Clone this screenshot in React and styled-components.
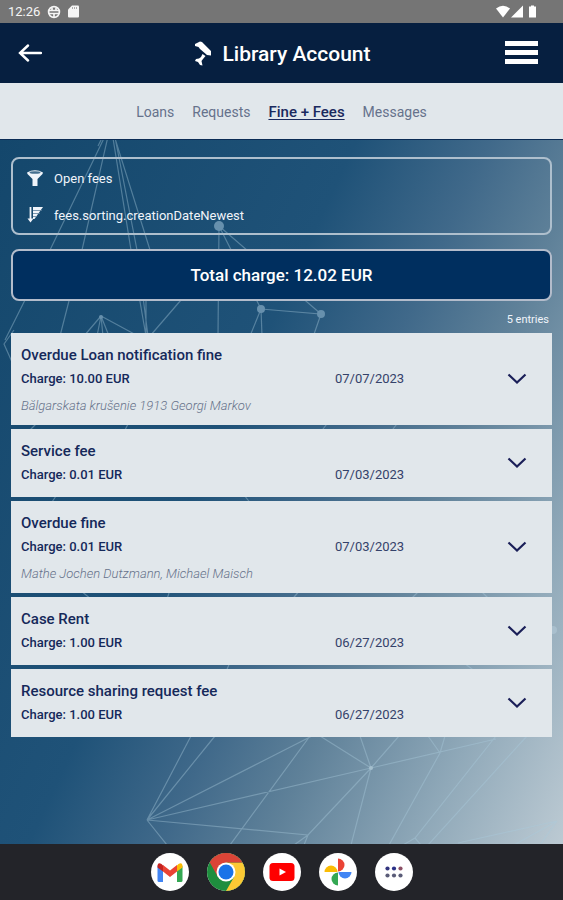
import React, { useState } from "react";
import styled, { createGlobalStyle } from "styled-components";

const GlobalStyle = createGlobalStyle`
  *, *::before, *::after { box-sizing: border-box; }
  body { margin: 0; font-family: Roboto, "Liberation Sans", sans-serif; }
  button { font: inherit; color: inherit; background: none; border: 0; padding: 0; cursor: pointer; }
`;

const Screen = styled.div`
  display: flex;
  flex-direction: column;
  min-height: 100vh;
  background: #202125;
`;

const StatusBar = styled.div`
  display: flex;
  align-items: center;
  justify-content: space-between;
  height: 23px;
  padding: 0 25px 0 8px;
  background: #757575;
  color: #f5f5f5;
  font-size: 13px;
`;

const StatusGroup = styled.div`
  display: flex;
  align-items: center;
  gap: 7px;
`;

const Header = styled.header`
  display: grid;
  grid-template-columns: 42px 1fr 34px;
  align-items: center;
  height: 60px;
  padding: 0 24px 0 18px;
  background: #061f40;
  color: #fff;
`;

const IconButton = styled.button`
  display: flex;
  align-items: center;
  justify-content: ${(p) => p.$align || "center"};
  height: 40px;
`;

const Title = styled.h1`
  display: flex;
  align-items: center;
  justify-content: center;
  gap: 10px;
  margin: 0;
  padding-top: 2px;
  font-size: 21px;
  font-weight: 500;
  line-height: 24px;
`;

const Tabs = styled.nav`
  display: flex;
  align-items: center;
  justify-content: center;
  gap: 18px;
  height: 57px;
  padding-top: 2px;
  background: #e1e7eb;
  border-bottom: 1px solid #0b2c55;
`;

const Tab = styled.a`
  color: ${(p) => (p.$active ? "#1a2a5e" : "#66728c")};
  font-size: ${(p) => (p.$active ? 15 : 14)}px;
  font-weight: ${(p) => (p.$active ? 500 : 400)};
  line-height: 20px;
  text-decoration: ${(p) => (p.$active ? "underline" : "none")};
  text-underline-offset: 2px;
`;

const Main = styled.main`
  position: relative;
  flex: 1;
  padding: 17px 11px 24px;
  background: linear-gradient(115deg, #14476c 0%, #1f5278 40%, #40698a 55%, #5f8199 67%, #90a9b9 84%, #bccad3 100%);
`;

const Network = styled.svg`
  position: absolute;
  inset: 0;
  width: 100%;
  height: 100%;
`;

const Content = styled.div`
  position: relative;
  display: flex;
  flex-direction: column;
`;

const Filters = styled.section`
  display: flex;
  flex-direction: column;
  gap: 13px;
  padding: 7px 13px 6px;
  border: 2px solid #aebfcd;
  border-radius: 8px;
`;

const FilterButton = styled.button`
  display: flex;
  align-items: center;
  gap: 10px;
  height: 24px;
  color: #f0f4fa;
  font-size: 13px;
  text-align: left;
`;

const Total = styled.div`
  margin-top: 14px;
  padding: 12px;
  border: 2px solid #b3bccb;
  border-radius: 8px;
  background: #002f5f;
  color: #fff;
  font-size: 17px;
  font-weight: 500;
  line-height: 24px;
  text-align: center;
`;

const Count = styled.p`
  margin: 11px 3px 5px;
  color: #f0f4fa;
  font-size: 11px;
  line-height: 16px;
  text-align: right;
`;

const List = styled.ul`
  display: flex;
  flex-direction: column;
  gap: 4px;
  margin: 0;
  padding: 0;
  list-style: none;
`;

const Card = styled.li`
  display: grid;
  grid-template-columns: 1fr 50px;
  align-items: center;
  padding: 10px;
  background: #e1e7eb;
  color: #15295a;
`;

const FeeTitle = styled.h2`
  margin: 0;
  font-size: 15px;
  font-weight: 500;
  line-height: 24px;
`;

const FeeRow = styled.div`
  display: grid;
  grid-template-columns: 2fr 1fr;
  font-size: 13px;
  font-weight: 500;
  line-height: 24px;
`;

const FeeDate = styled.time`
  color: #34426a;
  font-weight: 400;
`;

const FeeNote = styled.p`
  margin: 6px 0 0;
  color: #66728a;
  font-size: 13px;
  font-style: italic;
  font-weight: 300;
  line-height: 18px;
`;

const Dock = styled.footer`
  display: flex;
  align-items: center;
  justify-content: center;
  gap: 18px;
  height: 56px;
  background: #232429;
`;

const AppButton = styled.button`
  display: flex;
  width: 38px;
  height: 38px;
  border-radius: 50%;
  background: #fff;
  overflow: hidden;
`;

const tabs = ["Loans", "Requests", "Fine + Fees", "Messages"];

const fees = [
  { title: "Overdue Loan notification fine", charge: "10.00", date: "07/07/2023", note: "Bălgarskata krušenie 1913 Georgi Markov" },
  { title: "Service fee", charge: "0.01", date: "07/03/2023" },
  { title: "Overdue fine", charge: "0.01", date: "07/03/2023", note: "Mathe Jochen Dutzmann, Michael Maisch" },
  { title: "Case Rent", charge: "1.00", date: "06/27/2023" },
  { title: "Resource sharing request fee", charge: "1.00", date: "06/27/2023" },
];

const networkLines = `
M107 132L50 250L5 340 M109 132L82 250L60 336 M112 132L131 250L146 336 M114 132L137 250L148 336 M113 132L150 250
M105 132L98 146 M219 226L218 336 M219 226L261 309L321 314L219 226 M261 309L250 336 M261 309L262 336 M321 314L312 340
M181 300L150 336 M146 300V336 M101 316L97 336 M101 316L103 336 M101 316L109 336 M101 316L138 336 M101 316L84 336
M14 330L4 344L12 362 M40 420L20 440 M130 420L120 440 M330 420L316 438 M400 420L386 438 M60 490L50 505 M240 490L252 505
M80 590L92 600 M170 590L166 602 M420 590L408 602 M300 590L290 602 M480 590L492 602 M230 662L226 672 M460 660L476 672
M147 820L191 736 M147 820L215 736 M147 820L312 736 M147 820L371 768L496 739 M147 820L308 835 M147 820L167 845
M371 768L320 736 M371 768L360 736 M371 768L399 736 M371 768L308 835L294 845 M308 835L304 845 M371 768L351 845
M440 753L428 736 M440 753L445 736 M440 753L389 845 M310 736L230 845 M496 736L415 838L403 845 M415 838L421 845
M527 736L428 845 M557 821L458 843 M557 821L514 845 M557 821L540 845`;

const NetworkArt = () => (
  <Network viewBox="0 140 563 704" preserveAspectRatio="xMidYMin slice" aria-hidden="true">
    <path d={networkLines} fill="none" stroke="#a9cbdc" strokeOpacity="0.4" strokeWidth="1.2" />
    <g fill="#6790ad">
      <circle cx="219" cy="226" r="5" />
      <circle cx="261" cy="309" r="4" />
      <circle cx="321" cy="314" r="4" />
      <circle cx="101" cy="317" r="2" />
      <circle cx="371" cy="768" r="2" fill="#a4bfcd" />
      <circle cx="553" cy="630" r="4" fill="#a9bfcd" />
    </g>
  </Network>
);

const GlobeIcon = () => (
  <svg width="14" height="14" viewBox="0 0 14 14" fill="none" stroke="currentColor" strokeWidth="1.7" aria-hidden="true">
    <circle cx="7" cy="7" r="5.4" />
    <path d="M2 5.5h10M2 8.5h10M7 9v3M5 2.5v3M9 2.5v3" />
  </svg>
);

const CardIcon = () => (
  <svg width="11" height="13" viewBox="0 0 11 13" aria-hidden="true">
    <path d="M4 .5h6a1 1 0 0 1 1 1v10a1 1 0 0 1-1 1H1a1 1 0 0 1-1-1v-7z" fill="currentColor" />
    <path d="M4.500 2v2M6.500 2v2M8.500 2v2" stroke="#999" strokeWidth=".8" />
  </svg>
);

const SignalIcons = () => (
  <svg width="42" height="14" viewBox="0 0 42 14" fill="#fff" aria-hidden="true">
    <path d="M0 3.500Q7-2 14 3.500L7 12.500z" />
    <path d="M27 .5v12H15z" />
    <path d="M33 1.500h2V.5h3v1h2v11h-7z" />
  </svg>
);

const BackIcon = () => (
  <svg width="24" height="20" viewBox="0 0 24 20" fill="none" stroke="currentColor" strokeWidth="2.400" strokeLinecap="round" aria-hidden="true">
    <path d="M23 10H2M10 2.500L2 10l8 7.500" />
  </svg>
);

const MenuIcon = () => (
  <svg width="34" height="24" viewBox="0 0 34 24" fill="currentColor" aria-hidden="true">
    <path d="M0 0h33v5H0zM0 9h33v5H0zM0 18h33v5H0z" />
  </svg>
);

const LogoIcon = () => (
  <svg width="18" height="26" viewBox="0 0 18 26" fill="currentColor" aria-hidden="true">
    <path d="M1 3L6 .5L8 1L17 10V14.500L13 14L6 8L4.500 6L1 5z" />
    <path d="M8.500 13L11.500 15L9 18L7.500 20L8.500 24.500L6 24L4 21L1 20L2 18L5 17.500L7 16z" />
  </svg>
);

const FunnelIcon = () => (
  <svg width="18" height="18" viewBox="0 0 18 18" aria-hidden="true">
    <path d="M1 3.500Q9-1 17 3.500Q17 5 15 6.500L11.500 10V17H6.500V10L3 6.500Q1 5 1 3.500z" fill="currentColor" />
    <ellipse cx="9" cy="3.500" rx="5.500" ry="1.300" fill="#456f8f" />
  </svg>
);

const SortIcon = () => (
  <svg width="18" height="18" viewBox="0 0 18 18" aria-hidden="true">
    <path d="M4.500 1V14" fill="none" stroke="currentColor" strokeWidth="1.800" />
    <path d="M1.500 12.500H7.500L4.500 16.500z" fill="currentColor" />
    <path d="M7 1H17L8.500 13H7z" fill="currentColor" />
    <path d="M7 4.500H16M7 7.500H14M7 10.500H11" stroke="#5b7f9c" strokeWidth=".8" />
  </svg>
);

const ChevronIcon = () => (
  <svg width="20" height="12" viewBox="0 0 20 12" fill="none" stroke="#1a1f58" strokeWidth="2.200" aria-hidden="true">
    <path d="M1.500 1.500L10 9.500L18.500 1.500" />
  </svg>
);

const GmailIcon = () => (
  <svg width="38" height="38" viewBox="0 0 38 38" aria-hidden="true">
    <path d="M6.500 13v14.500a1.500 1.500 0 0 0 1.500 1.500h4V17z" fill="#4285f4" />
    <path d="M26 17v12h4a1.500 1.500 0 0 0 1.500-1.500V13z" fill="#34a853" />
    <path d="M12 12.500V18.500L6.500 14.500V12.500Q7 9 10.500 11z" fill="#c5221f" />
    <path d="M26 12.500V18.500L31.500 14.500V12.500Q31 9 27.500 11z" fill="#fbbc04" />
    <path d="M12 12L19 17.500L26 12V18.500L19 24L12 18.500z" fill="#ea4335" />
  </svg>
);

const ChromeIcon = () => (
  <svg width="38" height="38" viewBox="0 0 38 38" aria-hidden="true">
    <rect width="38" height="38" fill="#1e8e3e" />
    <path d="M19 9.500H38V38H19L27.200 23.800z" fill="#fcc934" />
    <path d="M2 8V0H36V9.500H19L10.800 23.800z" fill="#db4437" />
    <circle cx="19" cy="19" r="9.500" fill="#fff" />
    <circle cx="19" cy="19" r="7.500" fill="#1a73e8" />
  </svg>
);

const YouTubeIcon = () => (
  <svg width="38" height="38" viewBox="0 0 38 38" aria-hidden="true">
    <rect x="6.500" y="10" width="25" height="18" rx="3.500" fill="#f00" />
    <path d="M16.500 15.500L23 19L16.500 22.500z" fill="#fff" />
  </svg>
);

const PhotosIcon = () => (
  <svg width="38" height="38" viewBox="0 0 38 38" aria-hidden="true">
    <path d="M19 5.500a6.500 6.500 0 0 1 0 13z" fill="#ea4335" />
    <path d="M32.500 19a6.500 6.500 0 0 1-13 0z" fill="#4285f4" />
    <path d="M19 32.500a6.500 6.500 0 0 1 0-13z" fill="#34a853" />
    <path d="M5.500 19a6.500 6.500 0 0 1 13 0z" fill="#fbbc04" />
  </svg>
);

const AppsIcon = () => (
  <svg width="38" height="38" viewBox="0 0 38 38" fill="#5a5c78" aria-hidden="true">
    <circle cx="12.500" cy="15.500" r="2.100" fill="#33357f" />
    <circle cx="19" cy="15.500" r="2.100" fill="#2b3187" />
    <circle cx="25.500" cy="15.500" r="2.100" fill="#8c5066" />
    <circle cx="12.500" cy="22.500" r="2.100" />
    <circle cx="19" cy="22.500" r="2.100" />
    <circle cx="25.500" cy="22.500" r="2.100" />
  </svg>
);

const apps = [
  ["Gmail", GmailIcon],
  ["Chrome", ChromeIcon],
  ["YouTube", YouTubeIcon],
  ["Photos", PhotosIcon],
  ["All apps", AppsIcon],
];

export default function App() {
  const [active, setActive] = useState("Fine + Fees");
  return (
    <Screen>
      <GlobalStyle />
      <StatusBar>
        <StatusGroup>
          <span>12:26</span>
          <GlobeIcon />
          <CardIcon />
        </StatusGroup>
        <SignalIcons />
      </StatusBar>
      <Header>
        <IconButton $align="flex-start" aria-label="Back"><BackIcon /></IconButton>
        <Title><LogoIcon />Library Account</Title>
        <IconButton aria-label="Menu"><MenuIcon /></IconButton>
      </Header>
      <Tabs>
        {tabs.map((t) => (
          <Tab key={t} href="#" $active={t === active} onClick={() => setActive(t)}>{t}</Tab>
        ))}
      </Tabs>
      <Main>
        <NetworkArt />
        <Content>
          <Filters>
            <FilterButton><FunnelIcon />Open fees</FilterButton>
            <FilterButton><SortIcon />fees.sorting.creationDateNewest</FilterButton>
          </Filters>
          <Total>Total charge: 12.02 EUR</Total>
          <Count>5 entries</Count>
          <List>
            {fees.map((f) => (
              <Card key={f.title}>
                <div>
                  <FeeTitle>{f.title}</FeeTitle>
                  <FeeRow>
                    <span>Charge: {f.charge} EUR</span>
                    <FeeDate>{f.date}</FeeDate>
                  </FeeRow>
                  {f.note && <FeeNote>{f.note}</FeeNote>}
                </div>
                <IconButton aria-label={`Show details of ${f.title}`}><ChevronIcon /></IconButton>
              </Card>
            ))}
          </List>
        </Content>
      </Main>
      <Dock>
        {apps.map(([name, Icon]) => (
          <AppButton key={name} aria-label={name}><Icon /></AppButton>
        ))}
      </Dock>
    </Screen>
  );
}
